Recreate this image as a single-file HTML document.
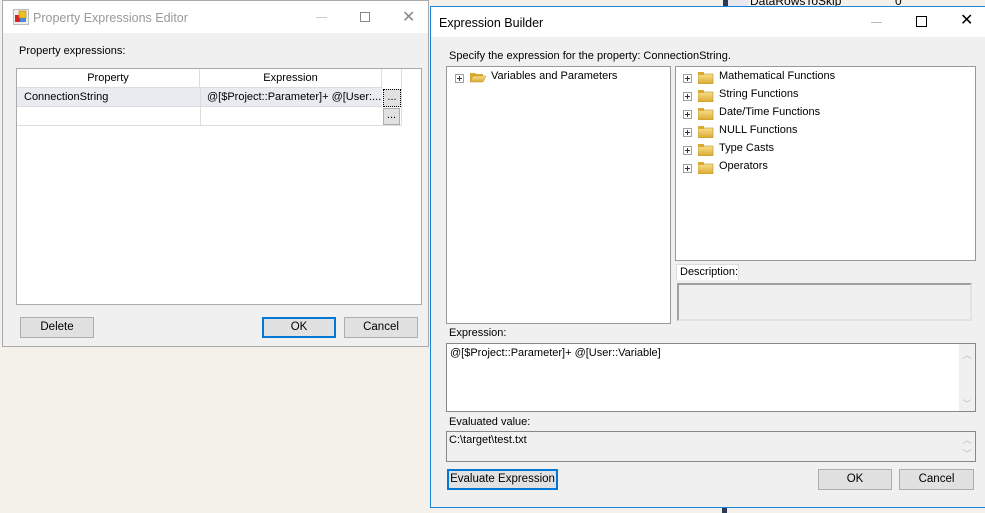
<!DOCTYPE html>
<html><head><meta charset="utf-8"><style>
*{box-sizing:border-box;margin:0;padding:0}
body{width:985px;height:513px;background:#f4f1ea;position:relative;overflow:hidden;font-family:"Liberation Sans",sans-serif;font-size:11px;color:#000}
.a{position:absolute}
.btn{position:absolute;background:#e1e1e1;border:1px solid #adadad;text-align:center;line-height:19px;font-size:11.5px}
.btn.def{border:2px solid #0078d7;line-height:17px}
.pl{position:absolute;width:9px;height:9px;border:1px solid #a0a0a0;background:#fff}
.pl:before{content:"";position:absolute;left:1px;top:3px;width:5px;height:1px;background:#333}
.pl:after{content:"";position:absolute;left:3px;top:1px;width:1px;height:5px;background:#333}
</style></head><body>
<svg width="0" height="0" style="position:absolute"><defs>
<linearGradient id="g" x1="0" y1="0" x2="0" y2="1"><stop offset="0" stop-color="#f8e08a"/><stop offset="1" stop-color="#d9a932"/></linearGradient></defs></svg>

<div class="a" style="left:723px;top:0;width:5px;height:7px;background:#2b3a55"></div>
<div class="a" style="left:728px;top:0;width:20px;height:7px;background:#e8e8ee"></div>
<div class="a" style="left:750px;top:-6px;font-size:12px">DataRowsToSkip</div>
<div class="a" style="left:895px;top:-6px;font-size:12px">0</div>
<div class="a" style="left:722px;top:507px;width:5px;height:6px;background:#2b3a55"></div>

<div class="a" style="left:2px;top:0;width:427px;height:347px;background:#f0f0f0;border:1px solid #aaa">
  <div class="a" style="left:0;top:0;width:425px;height:32px;background:#fff"></div>
  <svg class="a" style="left:10px;top:8px" width="16" height="16"><rect x="0.5" y="0.5" width="15" height="15" fill="#eee" stroke="#bbb"/><rect x="2" y="6" width="5" height="7" fill="#d22"/><rect x="6" y="2" width="7" height="7" fill="#f0c020" stroke="#b08000" stroke-width=".6"/><rect x="7" y="9" width="6" height="4" fill="#4a8ad8"/></svg>
  <div class="a" style="left:30px;top:10px;font-size:12.5px;color:#999">Property Expressions Editor</div>
  <div class="a" style="left:313px;top:16px;width:11px;height:1px;background:#ccc"></div>
  <div class="a" style="left:357px;top:11px;width:10px;height:10px;border:1px solid #888"></div>
  <div class="a" style="left:399px;top:6px;font-size:16px;color:#888">✕</div>
  <div class="a" style="left:16px;top:44px">Property expressions:</div>
  <div class="a" style="left:13px;top:67px;width:406px;height:237px;background:#fff;border:1px solid #aaa">
    <div class="a" style="left:0;top:0;width:183px;height:19px;border-right:1px solid #ddd;border-bottom:1px solid #ddd;text-align:center;line-height:18px">Property</div>
    <div class="a" style="left:183px;top:0;width:182px;height:19px;border-right:1px solid #ddd;border-bottom:1px solid #ddd;text-align:center;line-height:18px">Expression</div>
    <div class="a" style="left:365px;top:0;width:20px;height:57px;border-right:1px solid #ddd"></div>
    <div class="a" style="left:0;top:19px;width:365px;height:19px;background:#e8ecf1;border-bottom:1px solid #ddd"></div>
    <div class="a" style="left:7px;top:22px">ConnectionString</div>
    <div class="a" style="left:183px;top:19px;width:1px;height:38px;background:#ddd"></div>
    <div class="a" style="left:190px;top:22px">@[$Project::Parameter]+ @[User:...</div>
    <div class="a" style="left:0;top:56px;width:385px;height:1px;background:#ddd"></div>
    <div class="a" style="left:366px;top:20px;width:18px;height:18px;background:#e1e1e1;border:1px dotted #000;text-align:center;line-height:14px">...</div>
    <div class="a" style="left:366px;top:39px;width:17px;height:17px;background:#e1e1e1;border:1px solid #adadad;text-align:center;line-height:13px">...</div>
  </div>
  <div class="btn" style="left:17px;top:316px;width:74px;height:21px">Delete</div>
  <div class="btn def" style="left:259px;top:316px;width:74px;height:21px">OK</div>
  <div class="btn" style="left:341px;top:316px;width:74px;height:21px">Cancel</div>
</div>

<div class="a" style="left:430px;top:6px;width:555px;height:502px;background:#f0f0f0;border:1px solid #1883d7;border-right:none">
  <div class="a" style="left:0;top:0;width:555px;height:30px;background:#fff"></div>
  <div class="a" style="left:8px;top:9px;font-size:12.5px">Expression Builder</div>
  <div class="a" style="left:440px;top:15px;width:11px;height:1px;background:#bbb"></div>
  <div class="a" style="left:485px;top:9px;width:11px;height:11px;border:1px solid #000"></div>
  <div class="a" style="left:529px;top:3px;font-size:16px">✕</div>
  <div class="a" style="left:18px;top:43px">Specify the expression for the property: ConnectionString.</div>
  <div class="a" style="left:15px;top:59px;width:225px;height:258px;background:#fff;border:1px solid #999"></div>
  <div class="pl" style="left:24px;top:67px"></div>
  <svg class="a" style="left:38px;top:63px" width="18" height="14"><path d="M1 3h5l1 1h7v2H4L1 12z" fill="#d9a932"/><path d="M1 12L4 6h13l-3 6z" fill="url(#g)" stroke="#c0902a" stroke-width=".5"/></svg>
  <div class="a" style="left:60px;top:63px">Variables and Parameters</div>
  <div class="a" style="left:244px;top:59px;width:301px;height:195px;background:#fff;border:1px solid #999"></div>
  <div class="pl" style="left:252px;top:67px"></div><svg class="a" style="left:267px;top:65px" width="16" height="12"><rect x="0" y="2" width="15" height="10" fill="url(#g)" stroke="#c0902a" stroke-width=".6"/><rect x="0" y="0" width="6" height="3" fill="#d9a932"/></svg><div class="a" style="left:288px;top:63px">Mathematical Functions</div>
  <div class="pl" style="left:252px;top:85px"></div><svg class="a" style="left:267px;top:83px" width="16" height="12"><rect x="0" y="2" width="15" height="10" fill="url(#g)" stroke="#c0902a" stroke-width=".6"/><rect x="0" y="0" width="6" height="3" fill="#d9a932"/></svg><div class="a" style="left:288px;top:81px">String Functions</div>
  <div class="pl" style="left:252px;top:103px"></div><svg class="a" style="left:267px;top:101px" width="16" height="12"><rect x="0" y="2" width="15" height="10" fill="url(#g)" stroke="#c0902a" stroke-width=".6"/><rect x="0" y="0" width="6" height="3" fill="#d9a932"/></svg><div class="a" style="left:288px;top:99px">Date/Time Functions</div>
  <div class="pl" style="left:252px;top:121px"></div><svg class="a" style="left:267px;top:119px" width="16" height="12"><rect x="0" y="2" width="15" height="10" fill="url(#g)" stroke="#c0902a" stroke-width=".6"/><rect x="0" y="0" width="6" height="3" fill="#d9a932"/></svg><div class="a" style="left:288px;top:117px">NULL Functions</div>
  <div class="pl" style="left:252px;top:139px"></div><svg class="a" style="left:267px;top:137px" width="16" height="12"><rect x="0" y="2" width="15" height="10" fill="url(#g)" stroke="#c0902a" stroke-width=".6"/><rect x="0" y="0" width="6" height="3" fill="#d9a932"/></svg><div class="a" style="left:288px;top:135px">Type Casts</div>
  <div class="pl" style="left:252px;top:157px"></div><svg class="a" style="left:267px;top:155px" width="16" height="12"><rect x="0" y="2" width="15" height="10" fill="url(#g)" stroke="#c0902a" stroke-width=".6"/><rect x="0" y="0" width="6" height="3" fill="#d9a932"/></svg><div class="a" style="left:288px;top:153px">Operators</div>
  <div class="a" style="left:245px;top:257px;width:63px;height:16px;background:#fff;border:1px solid #ddd;border-bottom:none;padding-left:3px;line-height:14px">Description:</div>
  <div class="a" style="left:246px;top:276px;width:295px;height:38px;border:2px solid #a0a0a0;border-right-color:#e3e3e3;border-bottom-color:#e3e3e3"></div>
  <div class="a" style="left:18px;top:320px">Expression:</div>
  <div class="a" style="left:15px;top:336px;width:530px;height:69px;background:#fff;border:1px solid #888">
    <div class="a" style="left:3px;top:3px">@[$Project::Parameter]+ @[User::Variable]</div>
    <div class="a" style="right:0;top:0;width:16px;height:67px;background:#f0f0f0;color:#bbb;font-size:9px;text-align:center"><div style="margin-top:4px">︿</div><div style="margin-top:36px">﹀</div></div>
  </div>
  <div class="a" style="left:18px;top:409px">Evaluated value:</div>
  <div class="a" style="left:15px;top:424px;width:530px;height:31px;background:#f0f0f0;border:1px solid #888">
    <div class="a" style="left:2px;top:2px">C:\target\test.txt</div>
    <div class="a" style="right:0;top:0;width:16px;height:29px;color:#bbb;font-size:9px;text-align:center"><div style="margin-top:1px">︿</div><div style="margin-top:1px">﹀</div></div>
  </div>
  <div class="btn def" style="left:16px;top:462px;width:111px;height:21px">Evaluate Expression</div>
  <div class="btn" style="left:387px;top:462px;width:74px;height:21px">OK</div>
  <div class="btn" style="left:468px;top:462px;width:75px;height:21px">Cancel</div>
</div>
</body></html>
